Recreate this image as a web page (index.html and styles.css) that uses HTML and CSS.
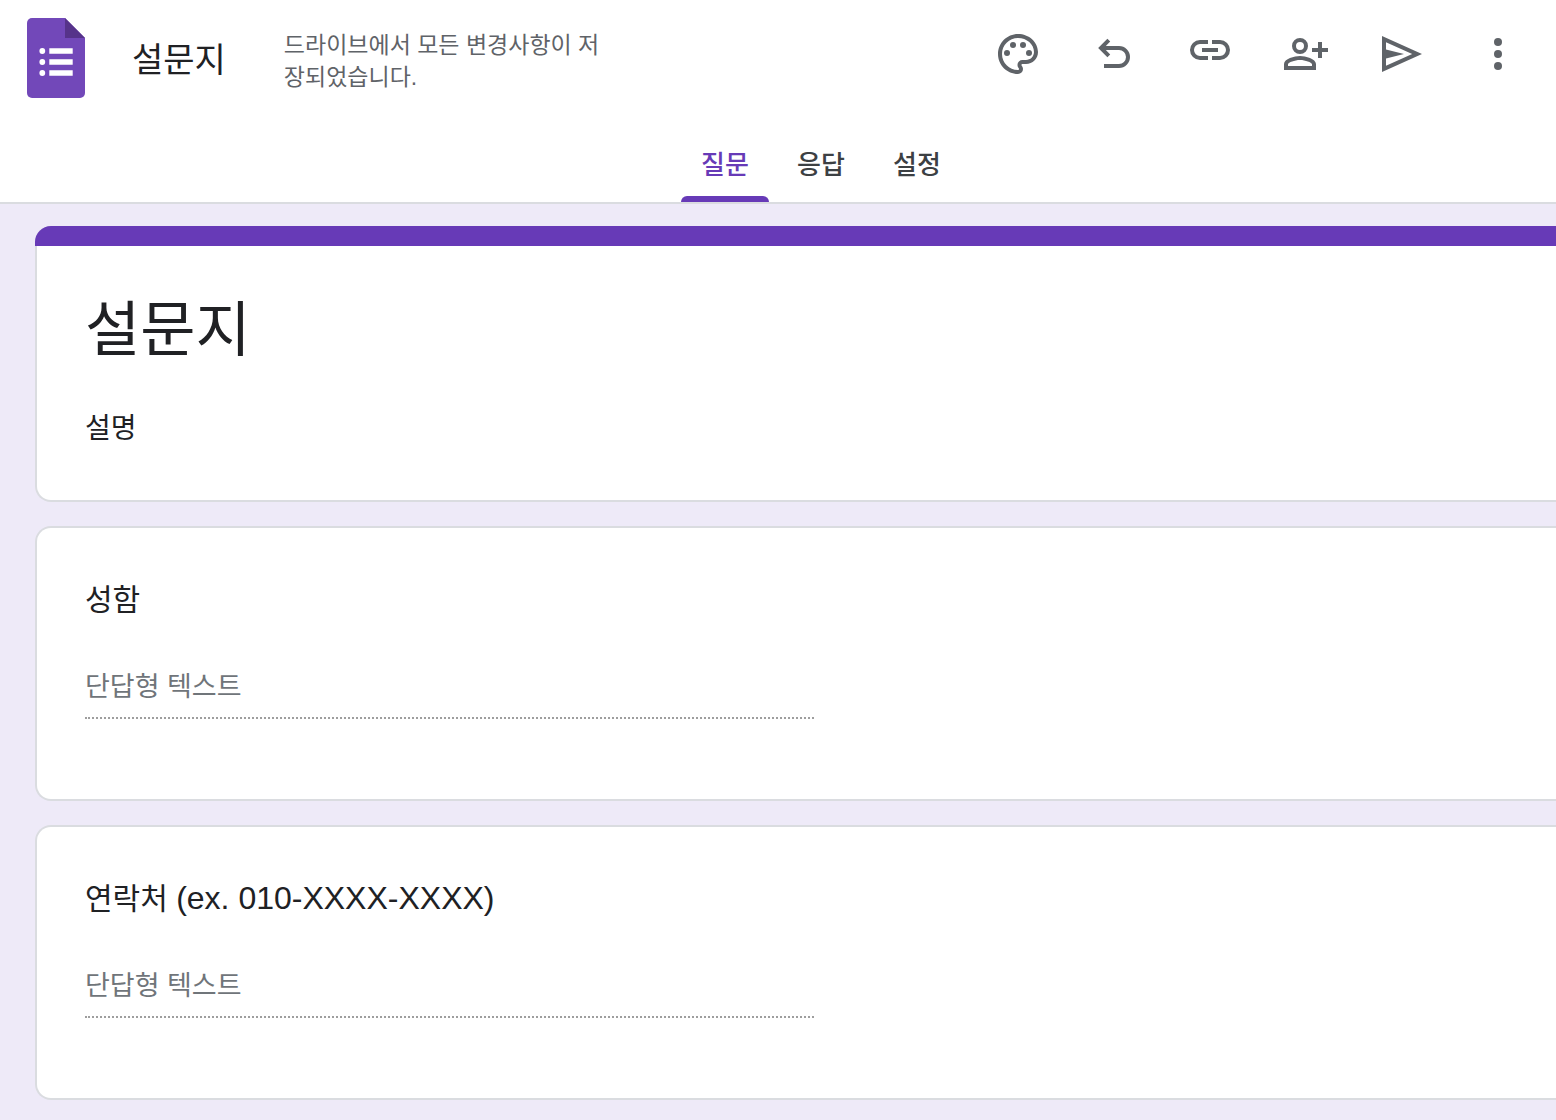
FILE: index.html
```html
<!DOCTYPE html>
<html lang="ko">
<head>
<meta charset="utf-8">
<meta name="viewport" content="width=device-width, initial-scale=1">
<title>설문지</title>
<link rel="stylesheet" href="styles.css">
</head>
<body>
<header class="header">
  <div class="topbar">
    <a class="logo" href="#" aria-label="설문지 홈">
      <svg viewBox="0 0 58 80" aria-hidden="true">
        <path fill="#7248b9" d="M5 0H38L58 20V75a5 5 0 0 1-5 5H5a5 5 0 0 1-5-5V5a5 5 0 0 1 5-5z"/>
        <path fill="#56338a" d="M38 0L58 20H38z"/>
        <g fill="#fff">
          <circle cx="15.3" cy="33" r="2.9"/><circle cx="15.3" cy="44" r="2.9"/><circle cx="15.3" cy="55" r="2.9"/>
          <path d="M22.3 30.3h23.4v5.5H22.3zM22.3 41.3h23.4v5.5H22.3zM22.3 52.2h23.4v5.5H22.3z"/>
        </g>
      </svg>
    </a>
    <div class="doc-name">설문지</div>
    <p class="save-status">드라이브에서 모든 변경사항이 저장되었습니다.</p>
    <div class="actions">
      <button type="button" class="icon-button" aria-label="테마 맞춤설정">
        <svg viewBox="0 0 24 24"><path d="M12 22C6.49 22 2 17.51 2 12S6.49 2 12 2s10 4.04 10 9c0 3.31-2.69 6-6 6h-1.77c-.28 0-.5.22-.5.5 0 .12.05.23.13.33.41.47.64 1.06.64 1.67A2.5 2.5 0 0 1 12 22zm0-18c-4.41 0-8 3.59-8 8s3.59 8 8 8c.28 0 .5-.22.5-.5a.54.54 0 0 0-.14-.35c-.41-.46-.63-1.05-.63-1.65a2.5 2.5 0 0 1 2.5-2.5H16c2.21 0 4-1.79 4-4 0-3.86-3.59-7-8-7z"/><circle cx="6.5" cy="11.5" r="1.5"/><circle cx="9.5" cy="7.5" r="1.5"/><circle cx="14.5" cy="7.5" r="1.5"/><circle cx="17.5" cy="11.5" r="1.5"/></svg>
      </button>
      <button type="button" class="icon-button" aria-label="실행취소">
        <svg viewBox="0 0 24 24"><path class="line" d="M7 18h7.5a4.5 4.5 0 0 0 0-9H6M9.4 5.1L5.5 9l3.9 3.9"/></svg>
      </button>
      <button type="button" class="icon-button" aria-label="응답자 링크 복사">
        <svg viewBox="0 0 24 24"><path class="line" d="M11 6H7a4 4 0 0 0 0 8h4M13 6h4a4 4 0 0 1 0 8h-4M8 10h8"/></svg>
      </button>
      <button type="button" class="icon-button" aria-label="공동작업자 추가">
        <svg viewBox="0 0 24 24"><circle class="line" cx="9" cy="8" r="3"/><path d="M9 13c-2.67 0-8 1.34-8 4v3h16v-3c0-2.66-5.33-4-8-4zm6 5H3v-.99C3.2 16.29 6.3 15 9 15s5.8 1.29 6 2v1z"/><path class="line" d="M19 6v8M15 10h8"/></svg>
      </button>
      <button type="button" class="icon-button" aria-label="보내기">
        <svg viewBox="0 0 24 24"><path fill-rule="evenodd" d="M2 3v18l20-9L2 3zM4 6.1L17.1 12 4 17.9V14.2L13 12 4 9.8z"/></svg>
      </button>
      <button type="button" class="icon-button" aria-label="더보기">
        <svg viewBox="0 0 24 24"><circle cx="12" cy="6" r="2"/><circle cx="12" cy="12" r="2"/><circle cx="12" cy="18" r="2"/></svg>
      </button>
    </div>
  </div>
  <nav class="tabs" role="tablist">
    <button type="button" class="tab tab-active" role="tab" aria-selected="true">질문</button>
    <button type="button" class="tab" role="tab" aria-selected="false">응답</button>
    <button type="button" class="tab" role="tab" aria-selected="false">설정</button>
  </nav>
</header>
<main class="form">
  <section class="card card-title">
    <h1 class="form-title">설문지</h1>
    <p class="form-description">설명</p>
  </section>
  <section class="card card-question">
    <label class="question" for="name">성함</label>
    <input class="answer" id="name" type="text" placeholder="단답형 텍스트">
  </section>
  <section class="card card-question">
    <label class="question" for="phone">연락처 <span class="latin">(ex. 010-XXXX-XXXX)</span></label>
    <input class="answer" id="phone" type="text" placeholder="단답형 텍스트">
  </section>
</main>
</body>
</html>
```
FILE: styles.css
```css
* {
  box-sizing: border-box;
}

body {
  margin: 0;
  min-height: 100vh;
  background: #eeeaf8;
  color: #202124;
  font-family: "Liberation Sans", "Noto Sans CJK KR", sans-serif;
}

button,
input {
  font-family: inherit;
}

h1,
p {
  margin: 0;
}

.header {
  background: #fff;
  border-bottom: 2px solid #dadce0;
}

.topbar {
  display: flex;
  align-items: flex-start;
  padding: 18px 34px 0 27px;
}

.logo {
  flex: none;
  width: 58px;
  height: 80px;
}

.logo svg,
.icon-button svg {
  display: block;
  width: 100%;
  height: 100%;
}

.doc-name {
  flex: none;
  margin: 18px 58px 0 47px;
  font-size: 34px;
  line-height: 48px;
}

.save-status {
  flex: 0 1 328px;
  padding-top: 11px;
  color: #5f6368;
  font-size: 23px;
  line-height: 32px;
}

.actions {
  display: flex;
  gap: 48px;
  margin-left: auto;
  padding-top: 12px;
}

.icon-button {
  flex: none;
  width: 48px;
  height: 48px;
  padding: 0;
  border: 0;
  background: none;
  cursor: pointer;
}

.icon-button svg {
  fill: #5f6368;
}

.icon-button .line {
  fill: none;
  stroke: #5f6368;
  stroke-width: 2;
}

.tabs {
  display: flex;
  justify-content: center;
  gap: 8px;
  margin-top: 32px;
  padding-left: 86px;
}

.tab {
  position: relative;
  width: 88px;
  height: 72px;
  padding: 0 0 2px;
  border: 0;
  background: none;
  color: #3c4043;
  font-size: 26px;
  font-weight: 500;
  line-height: 32px;
  cursor: pointer;
}

.tab-active {
  color: #673ab7;
}

.tab-active::after {
  content: "";
  position: absolute;
  right: 0;
  bottom: 0;
  left: 0;
  height: 6px;
  border-radius: 6px 6px 0 0;
  background: #673ab7;
}

.form {
  display: flex;
  flex-direction: column;
  gap: 24px;
  padding: 22px 0 20px 35px;
}

.card {
  padding: 48px 13px 48px 48px;
  border: 2px solid #dadce0;
  border-right: 0;
  border-radius: 16px 0 0 16px;
  background: #fff;
}

.card-title {
  position: relative;
  padding-top: 63px;
  padding-bottom: 51px;
}

.card-title::before {
  content: "";
  position: absolute;
  top: -2px;
  right: 0;
  left: -2px;
  height: 20px;
  border-radius: 16px 0 0 0;
  background: #673ab7;
}

.form-title {
  font-size: 60px;
  font-weight: 400;
  line-height: 80px;
}

.form-description {
  margin-top: 38px;
  font-size: 28px;
  line-height: 40px;
}

.card-question {
  padding-bottom: 80px;
}

.question {
  display: block;
  font-size: 30px;
  line-height: 47px;
}

.latin {
  font-size: 32px;
}

.answer {
  display: block;
  width: 50%;
  height: 56px;
  margin-top: 40px;
  padding: 0 0 6px;
  border: 0;
  border-bottom: 2px dotted #9e9e9e;
  outline: 0;
  background: none;
  color: #202124;
  font-size: 27px;
}

.answer::placeholder {
  color: #70757a;
  opacity: 1;
}
```
